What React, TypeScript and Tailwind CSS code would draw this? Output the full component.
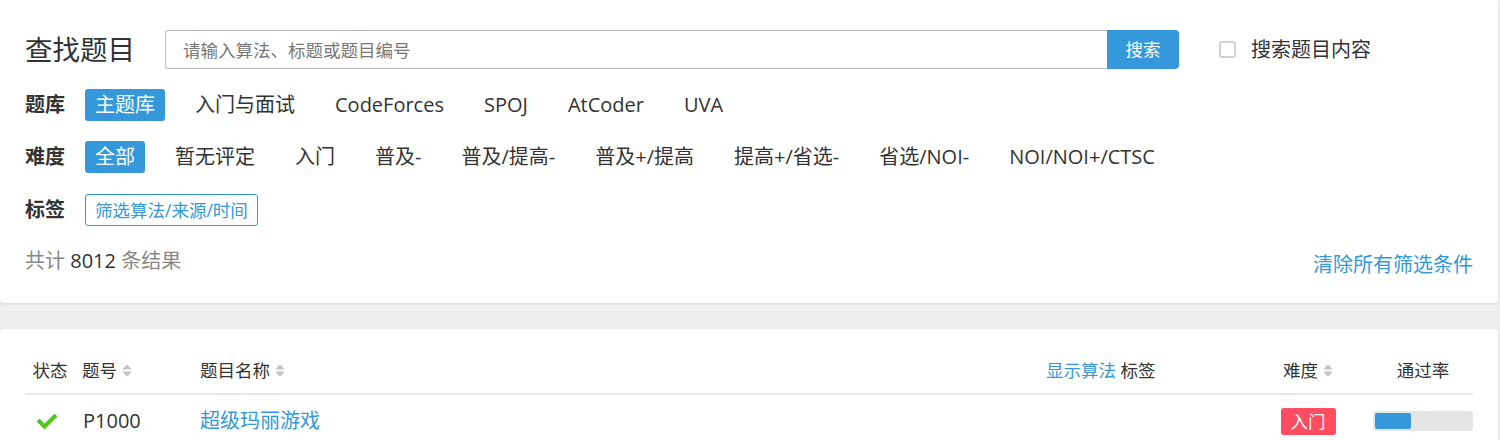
import React from 'react'

const font = 'font-["Open_Sans","Noto_Sans_CJK_SC",sans-serif]'

const libraries = ['主题库', '入门与面试', 'CodeForces', 'SPOJ', 'AtCoder', 'UVA']
const difficulties = ['全部', '暂无评定', '入门', '普及-', '普及/提高-', '普及+/提高', '提高+/省选-', '省选/NOI-', 'NOI/NOI+/CTSC']

function SortIcon() {
  return (
    <svg viewBox="0 0 320 512" className="ml-[5px] h-[15px] w-[10px] fill-[#c4c4c4]">
      <path d="M41 288h238c21.4 0 32.1 25.9 17 41L177 448c-9.4 9.4-24.6 9.4-33.9 0L24 329c-15.1-15.1-4.4-41 17-41zm255-105L177 64c-9.4-9.4-24.6-9.4-33.9 0L24 183c-15.1 15.1-4.4 41 17 41h238c21.4 0 32.1-25.9 17-41z" />
    </svg>
  )
}

function CheckIcon() {
  return (
    <svg viewBox="0 64 512 384" className="h-[15px] w-[20px] fill-[#52c41a]">
      <path d="M173.898 439.404l-166.4-166.4c-9.997-9.997-9.997-26.206 0-36.204l36.203-36.204c9.997-9.998 26.207-9.998 36.204 0L192 312.69 432.095 72.596c9.997-9.997 26.207-9.997 36.204 0l36.203 36.204c9.997 9.997 9.997 26.206 0 36.204l-294.4 294.401c-9.998 9.997-26.207 9.997-36.204-.001z" />
    </svg>
  )
}

function FilterRow({ label, items }: { label: string; items: string[] }) {
  return (
    <div className="flex items-center">
      <span className="w-[60px] text-[20px] font-bold leading-[32px] text-[#333]">{label}</span>
      <div className="flex items-center gap-[20px]">
        {items.map((item, i) => (
          <span
            key={item}
            className={`rounded-[3px] px-[10px] text-[20px] leading-[32px] ${
              i === 0 ? 'bg-[#3498db] text-white' : 'text-[#333]'
            }`}
          >
            {item}
          </span>
        ))}
      </div>
    </div>
  )
}

export default function App() {
  return (
    <div className={`min-h-screen bg-[#efefef] pr-[2px] ${font}`}>
      {/* Search card */}
      <div className="rounded-b-[4px] bg-white px-[25px] pt-[30px] pb-[23px] shadow-[0_1px_3px_rgba(0,0,0,0.1)]">
        <div className="flex h-[39px] items-center">
          <h1 className="text-[27.5px] font-normal leading-[39px] text-[#333]">查找题目</h1>
          <div className="ml-[30px] flex h-[39px] flex-1">
            <input
              placeholder="请输入算法、标题或题目编号"
              className="h-full flex-1 rounded-l-[3px] border border-r-0 border-[#bbb] px-[17px] text-[17.5px] text-[#333] outline-none placeholder:text-[#777]"
            />
            <button className="h-full w-[72px] rounded-r-[4px] bg-[#3498db] text-[17.5px] text-white">搜索</button>
          </div>
          <label className="ml-[40px] flex w-[254px] items-center">
            <span className="h-[17px] w-[17px] rounded-[3px] border-2 border-[#d2d2d2]" />
            <span className="ml-[15px] text-[20px] text-[#333]">搜索题目内容</span>
          </label>
        </div>

        <div className="mt-[20px] flex flex-col gap-[20px]">
          <FilterRow label="题库" items={libraries} />
          <FilterRow label="难度" items={difficulties} />
          <div className="mt-[1px] flex items-center">
            <span className="w-[60px] text-[20px] font-bold leading-[32px] text-[#333]">标签</span>
            <span className="rounded-[3px] border border-[#3498db] px-[9px] text-[17.5px] leading-[30px] text-[#3498db]">
              筛选算法/来源/时间
            </span>
          </div>
        </div>

        <div className="mt-[20px] flex items-start justify-between">
          <span className="text-[20px] leading-[30px] text-[#888]">
            共计 <span className="text-[#333]">8012</span> 条结果
          </span>
          <span className="pt-[4px] text-[20px] leading-[30px] text-[#3498db]">清除所有筛选条件</span>
        </div>
      </div>

      {/* Problem list card */}
      <div className="mt-[26px] rounded-t-[4px] bg-white px-[25px] pt-[22px] shadow-[0_1px_3px_rgba(0,0,0,0.1)]">
        <div className="grid h-[44px] grid-cols-[50px_125px_846px_1fr_96px_117px] items-start border-b-2 border-[#e6e6e6] text-[17.5px] leading-[38px] text-[#333]">
          <span className="text-center">状态</span>
          <span className="flex items-center pl-[7px]">
            题号
            <SortIcon />
          </span>
          <span className="flex items-center">
            题目名称
            <SortIcon />
          </span>
          <span>
            <span className="text-[#3498db]">显示算法</span> 标签
          </span>
          <span className="flex items-center justify-center">
            难度
            <SortIcon />
          </span>
          <span className="flex justify-end">
            <span className="w-[100px] text-center">通过率</span>
          </span>
        </div>

        <div className="grid h-[50px] grid-cols-[50px_125px_846px_1fr_96px_117px] items-center pt-[2px] text-[20px] text-[#333]">
          <span className="flex justify-center pr-[6px]">
            <CheckIcon />
          </span>
          <span className="pl-[8px]">P1000</span>
          <span className="text-[#3498db]">超级玛丽游戏</span>
          <span />
          <span className="flex justify-center">
            <span className="rounded-[3px] bg-[#fe4c61] px-[10px] text-[17.5px] leading-[27px] text-white">入门</span>
          </span>
          <span className="flex justify-end">
            <span className="h-[20px] w-[100px] rounded-[3px] bg-[#e6e6e6] p-[2px]">
              <span className="block h-full rounded-[2px] bg-[#3498db]" style={{ width: '37.5%' }} />
            </span>
          </span>
        </div>
      </div>
    </div>
  )
}
